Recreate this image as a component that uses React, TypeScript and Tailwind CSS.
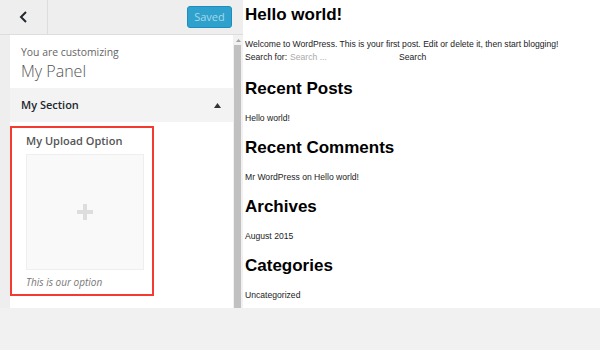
import { useState } from "react";

const widgets = [
  { title: "Recent Posts", body: "Hello world!" },
  { title: "Recent Comments", body: "Mr WordPress on Hello world!" },
  { title: "Archives", body: "August 2015" },
  { title: "Categories", body: "Uncategorized" },
];

function UploadControl() {
  return (
    <div className="mt-[4px] w-[144px] h-[170px] border-2 border-[#f33b2f] pl-[14px] pt-[5px] flex flex-col">
      <span className="text-[11px] leading-[16px] font-semibold text-[#555]">
        My Upload Option
      </span>
      <div className="mt-[5px] w-[118px] h-[116px] bg-[#f9f9f9] border border-[#eee] flex items-center justify-center">
        <svg width="16" height="16" viewBox="0 0 16 16">
          <rect x="6" y="0" width="4" height="16" fill="#ddd" />
          <rect x="0" y="6" width="16" height="4" fill="#ddd" />
        </svg>
      </div>
      <span className="mt-[5px] text-[10px] leading-[14px] italic text-[#777]">
        This is our option
      </span>
    </div>
  );
}

function Sidebar() {
  return (
    <div className="w-[243px] h-full bg-[#eee] flex flex-col font-['Open_Sans',sans-serif]">
      <div className="h-[35px] shrink-0 flex items-center justify-between border-b border-[#ddd]">
        <div className="w-[48px] h-full border-r border-[#ddd] flex items-center justify-center">
          <svg width="10" height="12" viewBox="0 0 10 12">
            <path d="M7 1 L2 6 L7 11" stroke="#23282d" strokeWidth="2" fill="none" />
          </svg>
        </div>
        <button className="mr-[11px] w-[45px] h-[22px] rounded-[3px] bg-[#2ea2cc] border border-[#1e8cbe] text-[11px] text-[#a9d7ea]">
          Saved
        </button>
      </div>
      <div className="flex-1 flex">
        <div className="w-[10px]" />
        <div className="w-[223px] bg-white flex flex-col">
          <div className="h-[53px] pl-[11px] pt-[10px] flex flex-col">
            <span className="text-[10.4px] leading-[14px] text-[#666]">You are customizing</span>
            <span className="text-[16px] leading-[24px] font-light text-[#555]">My Panel</span>
          </div>
          <div className="h-[34px] bg-[#f3f3f3] pl-[11px] pr-[12px] flex items-center justify-between">
            <span className="text-[11px] font-semibold text-[#23282d]">My Section</span>
            <svg width="7" height="5" viewBox="0 0 7 5">
              <path d="M0 5 L3.5 0 L7 5 Z" fill="#333" />
            </svg>
          </div>
          <UploadControl />
        </div>
        <div className="w-[10px] flex flex-col bg-[#f1f1f1]">
          <div className="h-[10px] flex items-center justify-center">
            <svg width="5" height="3" viewBox="0 0 5 3">
              <path d="M0 3 L2.5 0 L5 3 Z" fill="#a3a3a3" />
            </svg>
          </div>
          <div className="flex-1 w-[7px] ml-[1px] bg-[#c1c1c1]" />
        </div>
      </div>
    </div>
  );
}

function Preview() {
  const [query, setQuery] = useState("");
  return (
    <div className="flex-1 h-full bg-white pl-[2px] text-black font-['Liberation_Sans',Arial,sans-serif]">
      <h1 className="text-[17px] leading-[30px] font-bold">Hello world!</h1>
      <div className="mt-[8px] text-[8.6px] leading-[13px] text-[#222]">
        <p>Welcome to WordPress. This is your first post. Edit or delete it, then start blogging!</p>
        <div className="flex items-center">
          <span>Search for:</span>
          <input
            value={query}
            onChange={(e) => setQuery(e.target.value)}
            placeholder="Search ..."
            className="ml-[3px] w-[106px] h-[13px] outline-none text-[8.6px] placeholder:text-[#aaa]"
          />
          <span className="ml-[3px]">Search</span>
        </div>
      </div>
      <div className="mt-[9.5px]">
        {widgets.map((w) => (
          <div key={w.title}>
            <h2 className="text-[17px] leading-[29px] font-bold">{w.title}</h2>
            <p className="text-[8.6px] leading-[30px] text-[#222]">{w.body}</p>
          </div>
        ))}
      </div>
    </div>
  );
}

export default function App() {
  return (
    <div className="w-[600px] h-[350px] bg-[#f1f1f1]">
      <div className="h-[308px] flex">
        <Sidebar />
        <Preview />
      </div>
    </div>
  );
}
